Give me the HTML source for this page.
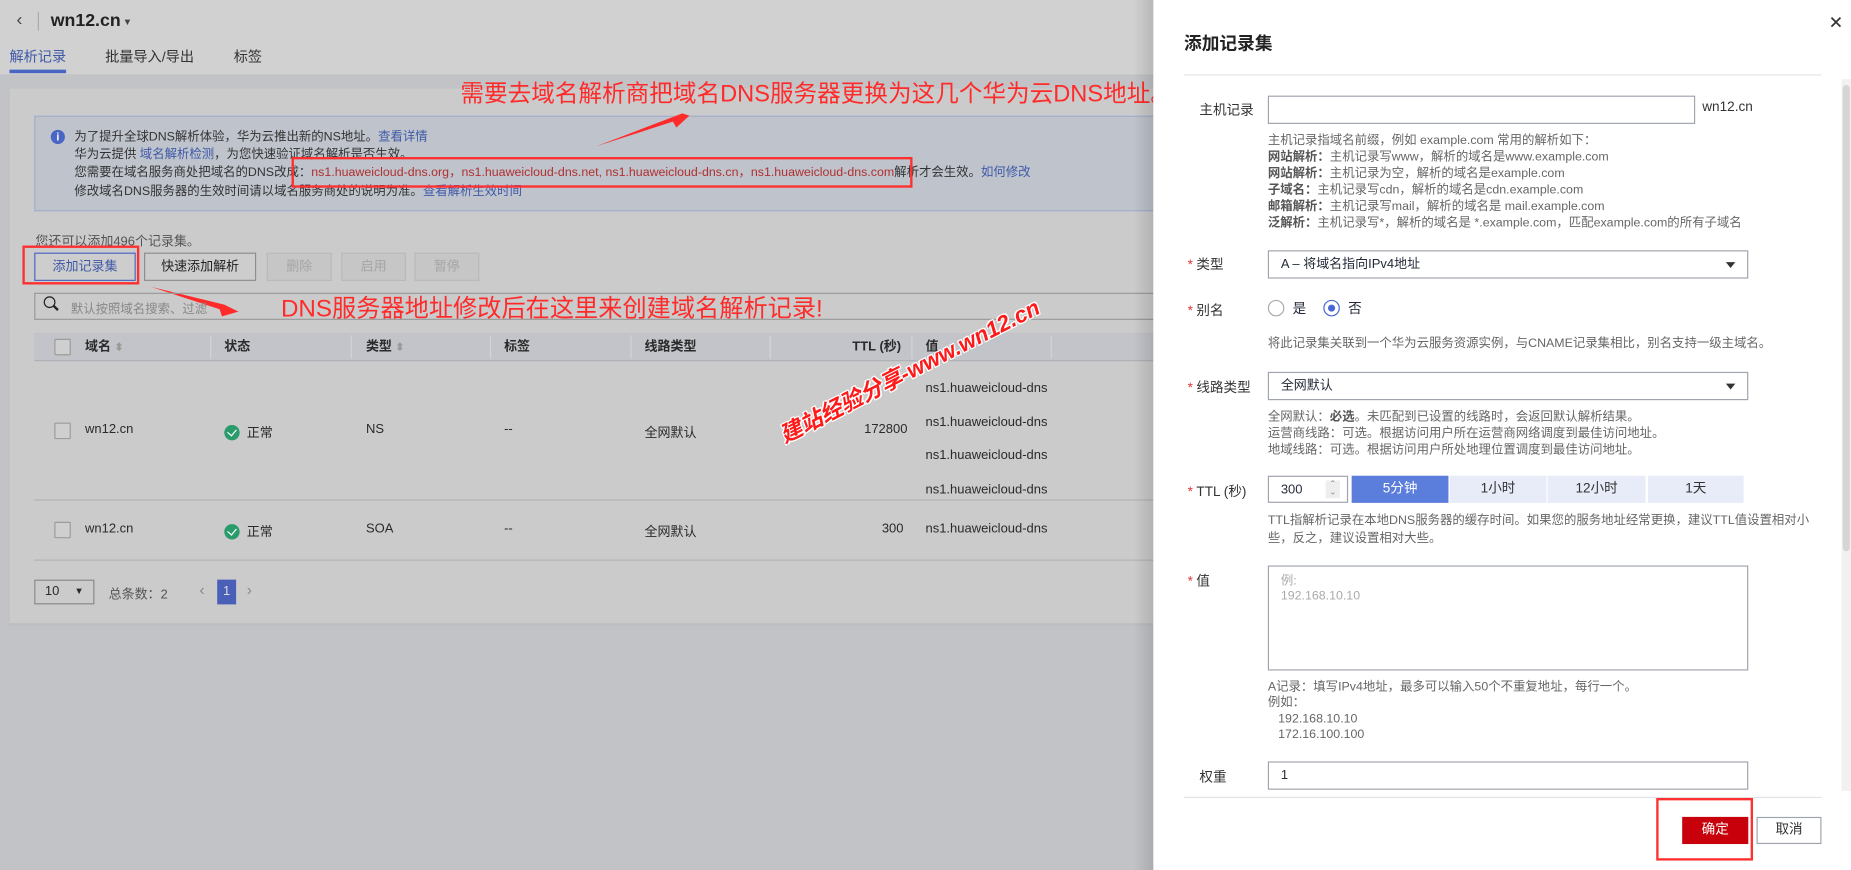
<!DOCTYPE html>
<html><head><meta charset="utf-8">
<style>
*{box-sizing:border-box;margin:0;padding:0}
html,body{width:1851px;height:870px;overflow:hidden;background:#c2c3c6}
body{font-family:"Liberation Sans","Noto Sans CJK SC",sans-serif;color:#2a2a2a}
#s{position:absolute;left:0;top:0;width:1568px;height:737px;transform:scale(1.18048);transform-origin:0 0;background:#c2c3c6;font-size:11px}
.a{position:absolute;white-space:nowrap}
.lnk{color:#3f59a8}
.btn{position:absolute;top:214px;height:24px;border:1px solid #8e8e8e;background:#cdcdcd;font-size:11px;line-height:22px;text-align:center}
.dis{color:#a5a5a5;border-color:#b9b9b9;background:#c6c6c6}
.th{position:absolute;top:282px;height:24px;line-height:24px;font-weight:bold;font-size:11px}
.cd{position:absolute;top:284px;width:1px;height:20px;background:#d3d4d8}
.ok{display:inline-block;width:13px;height:13px;border-radius:50%;background:#2a9b6b;vertical-align:-3px;margin-right:6px;position:relative}
.ok:after{content:"";position:absolute;left:4px;top:2px;width:4px;height:6px;border:solid #fff;border-width:0 1.5px 1.5px 0;transform:rotate(40deg)}
.cb{position:absolute;width:14px;height:14px;border:1px solid #9c9c9c;background:#cfcfcf;border-radius:1px}
#d{position:absolute;left:977px;top:0;width:591px;height:737px;background:#fff;color:#252b3a}
#d .l{position:absolute;left:39px;font-size:11.5px;color:#333}
.star{color:#e0393e;margin-right:3px}
.in{position:absolute;left:97px;width:407px;height:24px;border:1px solid #a0a4ad;background:#fff;font-size:11px;line-height:22px;padding-left:10px}
.h{position:absolute;left:97px;font-size:10.5px;color:#666;line-height:14px;white-space:nowrap}
.h b{font-weight:bold;color:#555}
.tri{position:absolute;right:10px;top:9px;width:0;height:0;border-left:4px solid transparent;border-right:4px solid transparent;border-top:5px solid #333}
.tb{position:absolute;top:403px;height:23px;background:#e8ecf8;text-align:center;line-height:23px;font-size:11.5px;color:#333}
.red{color:#ff2b2b;font-family:"Liberation Sans","Noto Sans CJK SC",sans-serif}
</style></head><body><div id="s">
<div class="a" style="left:0;top:0;width:977px;height:63px;background:#d1d1d1"></div>
<div class="a" style="left:14px;top:8px;font-size:15px;color:#444">&#x2039;</div>
<div class="a" style="left:32px;top:10px;width:1px;height:16px;background:#aaa"></div>
<div class="a" style="left:43px;top:9px;font-size:15px;font-weight:bold;color:#222">wn12.cn</div>
<div class="a" style="left:104px;top:14px;font-size:8px;color:#444">▼</div>
<div class="a" style="left:8px;top:39px;font-size:12px;color:#3f59a8">解析记录</div>
<div class="a" style="left:8px;top:59px;width:48px;height:3px;background:#4a66c4"></div>
<div class="a" style="left:89px;top:39px;font-size:12px;color:#333">批量导入/导出</div>
<div class="a" style="left:198px;top:39px;font-size:12px;color:#333">标签</div>
<div class="a" style="left:8px;top:75px;width:969px;height:453px;background:#cbcbcb;box-shadow:0 1px 2px #b8b8b8"></div>
<div class="a" style="left:29px;top:98px;width:948px;height:81px;background:#bec3cc;border:1px solid #a4aecb;border-right:none"></div>
<div class="a" style="left:43px;top:110px;width:12px;height:12px;border-radius:50%;background:#4a66c4;color:#fff;font-size:9px;text-align:center;line-height:12px;font-weight:bold">i</div>
<div class="a" style="left:63px;top:109px;font-size:10.5px;line-height:15.2px;color:#333">为了提升全球DNS解析体验，华为云推出新的NS地址。<span class="lnk">查看详情</span><br>华为云提供 <span class="lnk">域名解析检测</span>，为您快速验证域名解析是否生效。<br>您需要在域名服务商处把域名的DNS改成：<span style="color:#b03030">ns1.huaweicloud-dns.org，ns1.huaweicloud-dns.net, ns1.huaweicloud-dns.cn，ns1.huaweicloud-dns.com</span>解析才会生效。<span class="lnk">如何修改</span><br>修改域名DNS服务器的生效时间请以域名服务商处的说明为准。<span class="lnk">查看解析生效时间</span></div>
<div class="a" style="left:247px;top:133px;width:526px;height:26px;border:2px solid #ff3030"></div>
<div class="a red" style="left:390px;top:63px;font-size:20px">需要去域名解析商把域名DNS服务器更换为这几个华为云DNS地址。</div>
<svg class="a" style="left:0;top:0" width="977" height="300"><polygon points="505,124 578,96 584,98 573,108 570,103" fill="#ff2b2b"/><polygon points="128,243 190,258 202,264 188,268 186,262" fill="#ff2b2b"/></svg>
<div class="a" style="left:30px;top:196px;font-size:11px;color:#555">您还可以添加496个记录集。</div>
<div class="btn" style="left:29px;width:86px;border-color:#4a66c4;color:#3f59a8">添加记录集</div>
<div class="a" style="left:19px;top:208px;width:99px;height:33px;border:2px solid #ff3030"></div>
<div class="btn" style="left:122px;width:95px;color:#222">快速添加解析</div>
<div class="btn dis" style="left:226px;width:55px">删除</div>
<div class="btn dis" style="left:289px;width:55px">启用</div>
<div class="btn dis" style="left:351px;width:55px">暂停</div>
<div class="a red" style="left:238px;top:244px;font-size:20.5px">DNS服务器地址修改后在这里来创建域名解析记录!</div>
<div class="a" style="left:29px;top:248px;width:948px;height:23px;border:1px solid #999;border-right:none"></div>
<div class="a" style="left:37px;top:251px;width:10px;height:10px;border:1.5px solid #222;border-radius:50%"></div>
<div class="a" style="left:45px;top:260px;width:5px;height:1.5px;background:#222;transform:rotate(45deg)"></div>
<div class="a" style="left:60px;top:254px;font-size:10.5px;color:#888">默认按照域名搜索、过滤</div>
<div class="a" style="left:29px;top:282px;width:948px;height:24px;background:#c2c4c9;border-bottom:1px solid #aeb0b5"></div>
<div class="cb" style="left:46px;top:287px"></div>
<div class="th" style="left:72px">域名 <span style="color:#999;font-size:9px">⬍</span></div>
<div class="th" style="left:190px">状态</div>
<div class="th" style="left:310px">类型 <span style="color:#999;font-size:9px">⬍</span></div>
<div class="th" style="left:427px">标签</div>
<div class="th" style="left:546px">线路类型</div>
<div class="th" style="left:722px">TTL (秒)</div>
<div class="th" style="left:784px">值</div>
<div class="cd" style="left:178px"></div><div class="cd" style="left:297px"></div><div class="cd" style="left:415px"></div><div class="cd" style="left:534px"></div><div class="cd" style="left:652px"></div><div class="cd" style="left:772px"></div><div class="cd" style="left:890px"></div>
<div class="a" style="left:29px;top:423px;width:948px;height:1px;background:#b3b3b3"></div>
<div class="a" style="left:29px;top:474px;width:948px;height:1px;background:#b3b3b3"></div>
<div class="cb" style="left:46px;top:358px"></div>
<div class="a" style="left:72px;top:358px">wn12.cn</div>
<div class="a" style="left:190px;top:358px"><span class="ok"></span>正常</div>
<div class="a" style="left:310px;top:358px">NS</div>
<div class="a" style="left:427px;top:358px">--</div>
<div class="a" style="left:546px;top:358px">全网默认</div>
<div class="a" style="left:732px;top:358px">172800</div>
<div class="a" style="left:784px;top:315px;line-height:28.7px">ns1.huaweicloud-dns<br>ns1.huaweicloud-dns<br>ns1.huaweicloud-dns<br>ns1.huaweicloud-dns</div>
<div class="cb" style="left:46px;top:442px"></div>
<div class="a" style="left:72px;top:442px">wn12.cn</div>
<div class="a" style="left:190px;top:442px"><span class="ok"></span>正常</div>
<div class="a" style="left:310px;top:442px">SOA</div>
<div class="a" style="left:427px;top:442px">--</div>
<div class="a" style="left:546px;top:442px">全网默认</div>
<div class="a" style="left:747px;top:442px">300</div>
<div class="a" style="left:784px;top:442px">ns1.huaweicloud-dns</div>
<div class="a" style="left:29px;top:491px;width:51px;height:21px;border:1px solid #8a8a8a"></div>
<div class="a" style="left:38px;top:495px">10</div>
<div class="a" style="left:63px;top:496px;font-size:8px">▼</div>
<div class="a" style="left:92px;top:495px;color:#555">总条数：2</div>
<div class="a" style="left:169px;top:492px;color:#888;font-size:13px">&#x2039;</div>
<div class="a" style="left:184px;top:491px;width:16px;height:21px;background:#4a5fb8;color:#ddd;text-align:center;line-height:21px">1</div>
<div class="a" style="left:209px;top:492px;color:#888;font-size:13px">&#x203A;</div>
<div class="a" style="left:648px;top:300px;transform:rotate(-27deg);transform-origin:50% 50%;font-size:19px;font-weight:bold;font-style:italic;color:#ff1a1a;text-shadow:1px 1px 0 #fff,-1px -1px 0 #fff,1px -1px 0 #fff,-1px 1px 0 #fff">建站经验分享-www.wn12.cn</div>
<div class="a" style="left:960px;top:0;width:17px;height:737px;background:linear-gradient(to right,rgba(0,0,0,0),rgba(0,0,0,.12))"></div>
<div id="d">
<div class="a" style="left:26px;top:26px;font-size:15px;font-weight:bold;color:#222">添加记录集</div>
<div class="a" style="left:572px;top:10px;font-size:15px;color:#333">✕</div>
<div class="a" style="left:26px;top:63px;width:540px;height:1px;background:#e3e3e3"></div>
<div class="a" style="left:583px;top:67px;width:8px;height:603px;background:#f1f1f1"></div>
<div class="a" style="left:584px;top:72px;width:6px;height:395px;background:#d5d5d5;border-radius:3px"></div>
<div class="l" style="top:85px">主机记录</div>
<div class="in" style="top:81px;width:362px"></div>
<div class="a" style="left:465px;top:85px;font-size:11.5px;color:#333">wn12.cn</div>
<div class="h" style="top:112px">主机记录指域名前缀，例如 example.com 常用的解析如下：<br><b>网站解析：</b>主机记录写www，解析的域名是www.example.com<br><b>网站解析：</b>主机记录为空，解析的域名是example.com<br><b>子域名：</b>主机记录写cdn，解析的域名是cdn.example.com<br><b>邮箱解析：</b>主机记录写mail，解析的域名是 mail.example.com<br><b>泛解析：</b>主机记录写*，解析的域名是 *.example.com，匹配example.com的所有子域名</div>
<div class="l" style="top:216px;left:29px"><span class="star">*</span>类型</div>
<div class="in" style="top:212px">A – 将域名指向IPv4地址<span class="tri"></span></div>
<div class="l" style="top:255px;left:29px"><span class="star">*</span>别名</div>
<div class="a" style="left:97px;top:254px;width:14px;height:14px;border:1px solid #aaa;border-radius:50%"></div>
<div class="a" style="left:118px;top:253px;font-size:11.5px">是</div>
<div class="a" style="left:144px;top:254px;width:14px;height:14px;border:1px solid #4a66d4;border-radius:50%"><div style="margin:3px;width:6px;height:6px;border-radius:50%;background:#4a66d4"></div></div>
<div class="a" style="left:165px;top:253px;font-size:11.5px">否</div>
<div class="h" style="top:284px">将此记录集关联到一个华为云服务资源实例，与CNAME记录集相比，别名支持一级主域名。</div>
<div class="l" style="top:320px;left:29px"><span class="star">*</span>线路类型</div>
<div class="in" style="top:315px">全网默认<span class="tri"></span></div>
<div class="h" style="top:346px">全网默认：<b>必选</b>。未匹配到已设置的线路时，会返回默认解析结果。<br>运营商线路：可选。根据访问用户所在运营商网络调度到最佳访问地址。<br>地域线路：可选。根据访问用户所处地理位置调度到最佳访问地址。</div>
<div class="l" style="top:408px;left:29px"><span class="star">*</span>TTL (秒)</div>
<div class="in" style="top:403px;width:68px;height:23px">300<div style="position:absolute;right:6px;top:3px;width:12px;height:15px;background:#eee;font-size:7px;line-height:7px;color:#888;text-align:center">⌃<br>⌄</div></div>
<div class="tb" style="left:168px;width:82px;background:#5b7ddc;color:#fff">5分钟</div>
<div class="tb" style="left:251px;width:82px">1小时</div>
<div class="tb" style="left:334px;width:83px">12小时</div>
<div class="tb" style="left:419px;width:81px">1天</div>
<div class="h" style="top:434px;line-height:15px">TTL指解析记录在本地DNS服务器的缓存时间。如果您的服务地址经常更换，建议TTL值设置相对小<br>些，反之，建议设置相对大些。</div>
<div class="l" style="top:484px;left:29px"><span class="star">*</span>值</div>
<div class="in" style="top:479px;height:89px;color:#aaa;font-size:10.5px;line-height:13px;padding-top:6px">例:<br>192.168.10.10</div>
<div class="h" style="top:576px;line-height:13.4px">A记录：填写IPv4地址，最多可以输入50个不重复地址，每行一个。<br>例如：<br>&nbsp;&nbsp;&nbsp;192.168.10.10<br>&nbsp;&nbsp;&nbsp;172.16.100.100</div>
<div class="l" style="top:650px">权重</div>
<div class="in" style="top:645px">1</div>
<div class="a" style="left:26px;top:675px;width:540px;height:1px;background:#e3e3e3"></div>
<div class="a" style="left:448px;top:692px;width:56px;height:23px;background:#c7000b;color:#fff;text-align:center;line-height:23px;font-size:11.5px">确定</div>
<div class="a" style="left:426px;top:676px;width:82px;height:53px;border:2px solid #ff3030"></div>
<div class="a" style="left:511px;top:692px;width:55px;height:23px;border:1px solid #a0a4ad;text-align:center;line-height:21px;font-size:11.5px;color:#333">取消</div>
</div>
</div></body></html>
